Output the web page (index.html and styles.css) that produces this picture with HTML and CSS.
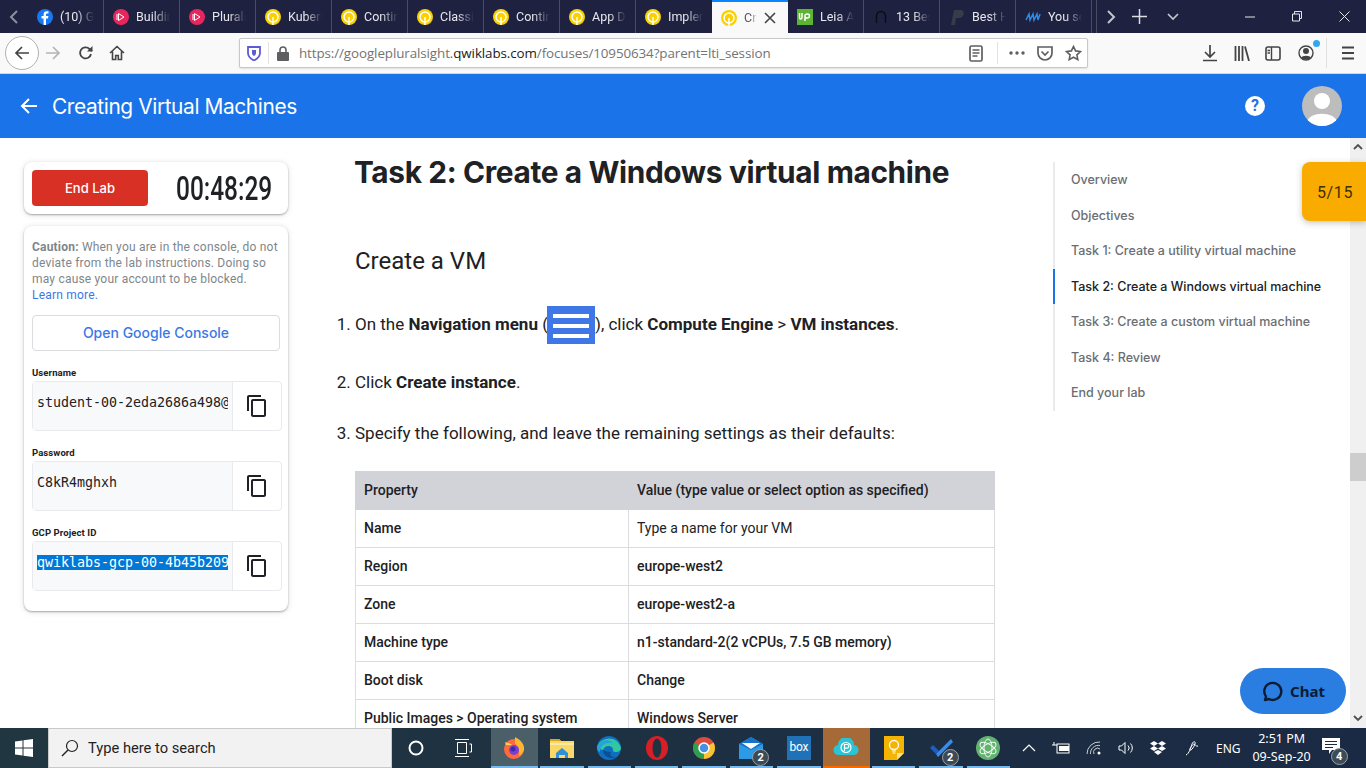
FILE: index.html
```html
<!DOCTYPE html>
<html lang="en">

<head>
    <meta charset="utf-8" />
    <title>Creating Virtual Machines</title>
    <link rel="stylesheet" href="styles.css">
</head>

<body>
    <div class="tabbar">
        <svg class="tab-scroll" width="10" height="16" viewBox="0 0 10 16"><path d="M8 2 2 8l6 6" fill="none" stroke="#8d8f9e" stroke-width="2"/></svg>
        <div class="tab"><svg class="favicon" viewBox="0 0 16 16"><circle cx="8" cy="8" r="8" fill="#1877f2"/><path d="M9 16V9.5h2l.4-2.4H9V5.8c0-.8.3-1.2 1.200-1.200h1.300V2.400C11 2.300 10.400 2.300 9.800 2.300 7.900 2.300 6.600 3.400 6.600 5.500v1.600H4.500v2.400h2.100V16z" fill="#fff"/></svg><span class="tab-text">(10) Get started</span></div>
        <div class="tab"><svg class="favicon" viewBox="0 0 16 16"><circle cx="8" cy="8" r="8" fill="#e8265e"/><path d="M5.500 4.500v7l5.500-3.500z" fill="none" stroke="#fff"/><path d="M4 5v6" stroke="#fff"/></svg><span class="tab-text">Building</span></div>
        <div class="tab"><svg class="favicon" viewBox="0 0 16 16"><circle cx="8" cy="8" r="8" fill="#e8265e"/><path d="M5.500 4.500v7l5.500-3.500z" fill="none" stroke="#fff"/><path d="M4 5v6" stroke="#fff"/></svg><span class="tab-text">Pluralsight</span></div>
        <div class="tab"><svg class="favicon" viewBox="0 0 16 16"><use href="#qwik"/></svg><span class="tab-text">Kubernetes</span></div>
        <div class="tab"><svg class="favicon" viewBox="0 0 16 16"><use href="#qwik"/></svg><span class="tab-text">Continuous</span></div>
        <div class="tab"><svg class="favicon" viewBox="0 0 16 16"><use href="#qwik"/></svg><span class="tab-text">Classification</span></div>
        <div class="tab"><svg class="favicon" viewBox="0 0 16 16"><use href="#qwik"/></svg><span class="tab-text">Continuous</span></div>
        <div class="tab"><svg class="favicon" viewBox="0 0 16 16"><use href="#qwik"/></svg><span class="tab-text">App Dev</span></div>
        <div class="tab tab-prev"><svg class="favicon" viewBox="0 0 16 16"><use href="#qwik"/></svg><span class="tab-text">Implementing</span></div>
        <div class="tab tab-active"><svg class="favicon" viewBox="0 0 16 16"><use href="#qwik"/></svg><span class="tab-text">Creating</span><svg class="tab-close" width="12" height="12" viewBox="0 0 12 12"><path d="M1 1l10 10M11 1 1 11" stroke="#444" stroke-width="1.600"/></svg></div>
        <div class="tab"><svg class="favicon" viewBox="0 0 16 16"><rect width="16" height="16" fill="#5cb531"/><path d="M2.500 4v4.500c0 2 2.500 2 2.500 0V4M8 12V6.500c0-2 4.500-2 4.500 .5s-3.500 2.500-4.500 1" fill="none" stroke="#fff" stroke-width="1.500"/></svg><span class="tab-text">Leia Admin</span></div>
        <div class="tab"><svg class="favicon" viewBox="0 0 16 16"><path d="M3.500 14V7a4.500 4.500 0 0 1 9 0v7" fill="none" stroke="#0c0c12" stroke-width="1.500"/></svg><span class="tab-text">13 Best</span></div>
        <div class="tab"><svg class="favicon" viewBox="0 0 16 16"><path d="M2 16 5 1h7c4 0 4 8-2 8H7l-1 7z" fill="#3a3b4a"/></svg><span class="tab-text">Best Host</span></div>
        <div class="tab"><svg class="favicon" viewBox="0 0 16 16"><path d="M1 11 4 5l1 6 3-6 1 6 3-6 1 6 2-6" fill="none" stroke="#2a8ce6" stroke-width="1.500"/></svg><span class="tab-text">You search</span></div>
        <div class="tab-controls">
            <svg width="10" height="16" viewBox="0 0 10 16"><path d="M2 2l6 6-6 6" fill="none" stroke="#c4c5cd" stroke-width="2"/></svg>
            <svg class="tab-plus" width="15" height="15" viewBox="0 0 15 15"><path d="M7.500 0v15M0 7.500h15" stroke="#dcdde2" stroke-width="1.500"/></svg>
            <svg class="tab-down" width="12" height="8" viewBox="0 0 12 8"><path d="M1 1l5 5 5-5" fill="none" stroke="#c4c5cd" stroke-width="1.700"/></svg>
        </div>
        <div class="window-btns">
            <svg width="10" height="10" viewBox="0 0 10 10"><path d="M0 5h10" stroke="#e6e6ea"/></svg>
            <svg width="10" height="11" viewBox="0 0 10 11"><path d="M.5 3h7v7h-7zM2.500 3V.5h7v7H7.500" fill="none" stroke="#e6e6ea"/></svg>
            <svg width="11" height="11" viewBox="0 0 11 11"><path d="M.5.500l10 10M10.500.500l-10 10" stroke="#e6e6ea"/></svg>
        </div>
    </div>

    <div class="toolbar">
        <div class="back-btn"><svg width="16" height="16" viewBox="0 0 16 16"><path d="M15 8H2M8 2 2 8l6 6" fill="none" stroke="#444" stroke-width="1.700"/></svg></div>
        <svg class="tool forward" width="16" height="16" viewBox="0 0 16 16"><path d="M1 8h13M8 2l6 6-6 6" fill="none" stroke="#b4b4b6" stroke-width="1.700"/></svg>
        <svg class="tool reload" width="16" height="16" viewBox="0 0 16 16"><path d="M13 9a5.500 5.500 0 1 1-1.500-5L14 6" fill="none" stroke="#444" stroke-width="1.800"/><path d="M14.500 1v5.500H9z" fill="#444"/></svg>
        <svg class="tool home" width="16" height="16" viewBox="0 0 16 16"><path d="M1 8 8 1.500 15 8M3.500 6.500V14.500h3.200v-4h2.600v4h3.200V6.500" fill="none" stroke="#444" stroke-width="1.600"/></svg>
        <div class="urlbar">
            <svg class="shield" width="14" height="16" viewBox="0 0 14 16"><path d="M1 2h12v6c0 4-3 6-6 7.500C4 14 1 12 1 8z" fill="none" stroke="#5b5bd6" stroke-width="1.800"/><path d="M5 5h4v3c0 1.500-1 2.500-2 3-1-.500-2-1.500-2-3z" fill="#5b5bd6"/></svg>
            <span class="url-sep sep-left"></span>
            <svg class="lock" width="12" height="15" viewBox="0 0 12 15"><rect y="6" width="12" height="9" rx="1" fill="#5f5f61"/><path d="M3 7V4a3 3 0 0 1 6 0v3" fill="none" stroke="#5f5f61" stroke-width="1.600"/></svg>
            <span class="url">https://googlepluralsight.<b>qwiklabs.com</b>/focuses/10950634?parent=lti_session</span>
            <svg class="url-reader" width="14" height="17" viewBox="0 0 14 17"><rect x="1" y="1" width="12" height="15" rx="1.500" fill="none" stroke="#5f5f61" stroke-width="1.700"/><path d="M3.500 5h7M3.500 8h7M3.500 11h5" stroke="#5f5f61" stroke-width="1.300"/></svg>
            <span class="url-sep sep-right"></span>
            <svg class="url-dots" width="16" height="4" viewBox="0 0 16 4"><circle cx="2" cy="2" r="1.700" fill="#5f5f61"/><circle cx="8" cy="2" r="1.700" fill="#5f5f61"/><circle cx="14" cy="2" r="1.700" fill="#5f5f61"/></svg>
            <svg class="url-pocket" width="16" height="15" viewBox="0 0 16 15"><path d="M1 1h14v6a7 7 0 0 1-14 0z" fill="none" stroke="#5f5f61" stroke-width="1.700"/><path d="M4.500 5.500 8 9l3.500-3.500" fill="none" stroke="#5f5f61" stroke-width="1.700"/></svg>
            <svg class="url-star" width="17" height="16" viewBox="0 0 17 16"><path d="M8.500 1.500l2.100 4.400 4.900.6-3.600 3.300.9 4.800-4.300-2.400-4.300 2.400.9-4.800-3.600-3.300 4.900-.6z" fill="none" stroke="#5f5f61" stroke-width="1.600"/></svg>
        </div>
        <svg class="tool download" width="16" height="17" viewBox="0 0 16 17"><path d="M8 0v11M3 7l5 5 5-5M1 15.500h14" fill="none" stroke="#444" stroke-width="1.700"/></svg>
        <svg class="tool library" width="16" height="15" viewBox="0 0 16 15"><path d="M1.500 0v15M5 0v15M8.500 0v15M11 .5l4 14.500" fill="none" stroke="#444" stroke-width="1.800"/></svg>
        <svg class="tool sidebar" width="16" height="15" viewBox="0 0 16 15"><rect x="1" y="1" width="14" height="13" rx="2" fill="none" stroke="#444" stroke-width="1.600"/><path d="M6.500 1v13M2.500 4.500h2.500M2.500 7h2.500" stroke="#444" stroke-width="1.400"/></svg>
        <div class="account">
            <svg width="16" height="16" viewBox="0 0 16 16"><circle cx="8" cy="8" r="7" fill="none" stroke="#444" stroke-width="1.400"/><circle cx="8" cy="6" r="3" fill="#444"/><path d="M3 13c1-3 9-3 10 0-2 2-8 2-10 0z" fill="#444"/></svg>
            <span class="account-dot"></span>
        </div>
        <span class="tool-sep"></span>
        <svg class="tool hamburger" width="14" height="14" viewBox="0 0 14 14"><path d="M1 1.500h12M1 7h12M1 12.500h12" stroke="#444" stroke-width="1.800"/></svg>
    </div>

    <header class="lab-header">
        <svg width="20" height="20" viewBox="0 0 20 20"><path d="M18 10H3M10 3l-7 7 7 7" fill="none" stroke="#fff" stroke-width="2"/></svg>
        <h2 class="lab-title">Creating Virtual Machines</h2>
        <span class="help">?</span>
        <div class="avatar"><svg width="40" height="40" viewBox="0 0 40 40"><circle cx="20" cy="15" r="8" fill="#fff"/><path d="M5 36c2-11 28-11 30 0a20 20 0 0 1-30 0z" fill="#fff"/></svg></div>
    </header>

    <div class="content">
        <aside class="lab-side">
            <div class="card timer-card">
                <button class="end-btn">End Lab</button>
                <span class="timer">00:48:29</span>
            </div>
            <div class="card creds-card">
                <p class="caution"><b>Caution:</b> When you are in the console, do not deviate from the lab instructions. Doing so may cause your account to be blocked. <a>Learn more.</a></p>
                <div class="console-btn">Open Google Console</div>
                <label>Username</label>
                <div class="field"><span class="field-value">student-00-2eda2686a498@qwiklabs.net</span><span class="copy"><svg width="24" height="24" viewBox="0 0 24 24"><use href="#copy"/></svg></span></div>
                <label>Password</label>
                <div class="field"><span class="field-value">C8kR4mghxh</span><span class="copy"><svg width="24" height="24" viewBox="0 0 24 24"><use href="#copy"/></svg></span></div>
                <label>GCP Project ID</label>
                <div class="field"><span class="field-value"><span class="selected">qwiklabs-gcp-00-4b45b2097a1f</span></span><span class="copy"><svg width="24" height="24" viewBox="0 0 24 24"><use href="#copy"/></svg></span></div>
            </div>
        </aside>

        <main class="lab-main">
            <h1>Task 2: Create a Windows virtual machine</h1>
            <h2 class="sub">Create a VM</h2>
            <ol>
                <li class="step-one">On the <b>Navigation menu</b> (<svg class="nav-icon" width="48" height="38" viewBox="0 0 48 38"><rect width="48" height="38" fill="#3f78e6"/><path d="M6 8h36v4H6zM6 18h36v4H6zM6 28h36v4H6z" fill="#fff"/></svg>), click <b>Compute Engine</b> &gt; <b>VM instances</b>.</li>
                <li class="step-two">Click <b>Create instance</b>.</li>
                <li class="step-three">Specify the following, and leave the remaining settings as their defaults:</li>
            </ol>
            <table>
                <tr><th>Property</th><th>Value (type value or select option as specified)</th></tr>
                <tr><td><b>Name</b></td><td>Type a name for your VM</td></tr>
                <tr><td><b>Region</b></td><td><b>europe-west2</b></td></tr>
                <tr><td><b>Zone</b></td><td><b>europe-west2-a</b></td></tr>
                <tr><td><b>Machine type</b></td><td><b>n1-standard-2(2 vCPUs, 7.5 GB memory)</b></td></tr>
                <tr><td><b>Boot disk</b></td><td><b>Change</b></td></tr>
                <tr><td><b>Public Images &gt; Operating system</b></td><td><b>Windows Server</b></td></tr>
            </table>
        </main>

        <nav class="toc">
            <a>Overview</a>
            <a>Objectives</a>
            <a>Task 1: Create a utility virtual machine</a>
            <a class="current">Task 2: Create a Windows virtual machine</a>
            <a>Task 3: Create a custom virtual machine</a>
            <a>Task 4: Review</a>
            <a>End your lab</a>
        </nav>

        <div class="scrollbar">
            <svg width="10" height="6" viewBox="0 0 10 6"><path d="M1 5l4-4 4 4" fill="none" stroke="#505050" stroke-width="1.800"/></svg>
            <span class="thumb"></span>
            <svg width="10" height="6" viewBox="0 0 10 6"><path d="M1 1l4 4 4-4" fill="none" stroke="#505050" stroke-width="1.800"/></svg>
        </div>

        <div class="progress">5/15</div>
        <div class="chat"><svg width="22" height="22" viewBox="0 0 22 22"><path d="M4 20l1-3.500A8.500 8.500 0 1 1 8 19z" fill="none" stroke="#0b1c36" stroke-width="2.400" stroke-linejoin="round"/></svg>Chat</div>
    </div>

    <footer class="taskbar">
        <div class="start"><svg width="18" height="18" viewBox="0 0 18 18"><path d="M0 2.500 7.500 1.400V8.500H0zM8.500 1.300 18 0V8.500H8.500zM0 9.500H7.500V16.600L0 15.500zM8.500 9.500H18V18L8.500 16.700z" fill="#fff"/></svg></div>
        <div class="search"><svg width="18" height="18" viewBox="0 0 18 18"><circle cx="11" cy="7" r="5.500" fill="none" stroke="#222" stroke-width="1.200"/><path d="M7 11l-6 6" stroke="#222" stroke-width="1.400"/></svg><span>Type here to search</span></div>
        <div class="app"><svg width="16" height="16" viewBox="0 0 16 16"><circle cx="8" cy="8" r="6.500" fill="none" stroke="#fff" stroke-width="2"/></svg></div>
        <div class="app app-view"><svg width="18" height="18" viewBox="0 0 18 18"><path d="M3.500 3.500h9v11h-9zM1 .5h14M1 17.500h14M15.500 5h2v8h-2" fill="none" stroke="#fff"/></svg></div>
        <div class="app on active"><svg width="24" height="24" viewBox="0 0 24 24"><circle cx="12" cy="13" r="10" fill="#ff6a3d"/><path d="M13 1c6 3 10 8 9 13-1 3-3 5-5 6 1-6-1-10-4-12z" fill="#ffb52e"/><path d="M3 6c2 1 5 1 7 3H4z" fill="#ffd257"/><circle cx="12" cy="14" r="5" fill="#7b3fd6"/><circle cx="11" cy="13" r="2.500" fill="#3a2ba8"/></svg></div>
        <div class="app on"><svg width="24" height="20" viewBox="0 0 24 20"><path d="M0 1h9l2 2h13v17H0z" fill="#f9d868"/><path d="M0 1h9l2 2H0z" fill="#d9a520"/><path d="M0 5h24v2H0z" fill="#fbe9a4"/><path d="M6 15l6-5 6 5v5h-3v-3H9v3H6z" fill="#2f8fd8"/></svg></div>
        <div class="app on"><svg width="24" height="24" viewBox="0 0 24 24"><circle cx="12" cy="12" r="12" fill="#0f6fbe"/><path d="M0 12C2 1 20-2 24 12c0 4-6 5-8 3 1-6-8-7-10-1z" fill="#30c8a0"/><path d="M0 12C2 4 12 2 16 7 9 6 3 9 3 16c-2-1-3-2-3-4z" fill="#2a9fe0"/><path d="M6 14c0 6 7 10 14 7-5 1-8-2-6-5-3 0-6-1-8-2z" fill="#0b4f96"/></svg></div>
        <div class="app on"><svg width="22" height="24" viewBox="0 0 22 24"><ellipse cx="11" cy="12" rx="11" ry="12" fill="#d81f26"/><ellipse cx="11" cy="12" rx="4.500" ry="9.500" fill="#1f3443"/></svg></div>
        <div class="app on"><svg width="24" height="24" viewBox="0 0 24 24"><circle cx="12" cy="12" r="11" fill="#dd4b3e"/><path d="M12 12 21.500 6.500A11 11 0 0 1 12 23z" fill="#f6c52f"/><path d="M12 12 12 23A11 11 0 0 1 2.500 6.500z" fill="#2f9e4f"/><circle cx="12" cy="12" r="5" fill="#4a90e2" stroke="#fff" stroke-width="1.500"/></svg></div>
        <div class="app on"><svg width="24" height="22" viewBox="0 0 24 22"><path d="M0 7 12 0l12 7v15H0z" fill="#2b9be8"/><path d="M0 7 12 0l12 7-12 6z" fill="#1673c9"/><path d="M3 6h18l-9 6z" fill="#fff"/></svg><span class="count">2</span></div>
        <div class="app on"><span class="box-logo">box</span></div>
        <div class="app pcloud"><svg width="26" height="18" viewBox="0 0 26 18"><path d="M6 17a5 5 0 0 1-1-10 8 8 0 0 1 16 0 5 5 0 0 1-1 10z" fill="#2bc4d6"/><circle cx="13" cy="9.500" r="5" fill="none" stroke="#fff" stroke-width="1.200"/><path d="M11.500 13V6.500h2.500a1.800 1.800 0 0 1 0 3.600h-2.500" fill="none" stroke="#fff" stroke-width="1.200"/></svg></div>
        <div class="app on"><svg width="20" height="24" viewBox="0 0 20 24"><path d="M0 0h20v17l-7 7H0z" fill="#f4b400"/><path d="M13 24v-7h7z" fill="#fbe09a"/><circle cx="10" cy="9" r="4.500" fill="none" stroke="#fff" stroke-width="1.300"/><path d="M8 15h4M8.500 17h3" stroke="#fff"/></svg></div>
        <div class="app on"><svg width="24" height="20" viewBox="0 0 24 20"><path d="M1 10l3-3 6 6-3 3z" fill="#1d5fc1"/><path d="M7 16 22 1l2 3L9 19z" fill="#3b8be8"/></svg><span class="count">2</span></div>
        <div class="app on"><svg width="24" height="24" viewBox="0 0 24 24"><circle cx="12" cy="12" r="12" fill="#62b36f"/><g fill="none" stroke="#fff" stroke-width=".9"><ellipse cx="12" cy="12" rx="4" ry="9"/><ellipse cx="12" cy="12" rx="4" ry="9" transform="rotate(60 12 12)"/><ellipse cx="12" cy="12" rx="4" ry="9" transform="rotate(120 12 12)"/></g></svg></div>
        <div class="tray">
            <svg width="14" height="8" viewBox="0 0 14 8"><path d="M1 7l6-6 6 6" fill="none" stroke="#fff" stroke-width="1.200"/></svg>
            <svg width="18" height="14" viewBox="0 0 18 14"><rect x="5" y="3" width="12" height="9" fill="none" stroke="#fff"/><rect x="7" y="5" width="10" height="5" fill="#fff"/><path d="M0 4h5M2 1v3" stroke="#fff"/></svg>
            <svg width="16" height="14" viewBox="0 0 16 14"><path d="M1 13A12 12 0 0 1 14 1M4.500 13A8 8 0 0 1 14 4.500M8 13A4 4 0 0 1 14 8" fill="none" stroke="#c8ced2"/><circle cx="13" cy="12" r="1.500" fill="#fff"/></svg>
            <svg width="16" height="14" viewBox="0 0 16 14"><path d="M1 5h2.500L7 1.500v11L3.500 9H1zM10 4.500a3.500 3.500 0 0 1 0 5M12.500 2.500a6.500 6.500 0 0 1 0 9" fill="none" stroke="#fff"/></svg>
            <svg width="16" height="15" viewBox="0 0 16 15"><path d="M4 0 8 2.500 4 5 0 2.500zM12 0l4 2.500L12 5 8 2.500zM4 5l4 2.500L4 10 0 7.500zM12 5l4 2.500L12 10 8 7.500zM4 11l4-2 4 2-4 3z" fill="#fff"/></svg>
            <svg class="tray-pen" width="14" height="16" viewBox="0 0 14 16"><path d="M1 15c3-1 5-8 6-11s4-3 3 0-4 7-5 6 3-6 4-6 2 3 4 2" fill="none" stroke="#fff"/></svg>
            <span class="lang">ENG</span>
            <span class="clock">2:51 PM<br>09-Sep-20</span>
            <div class="notif"><svg width="18" height="16" viewBox="0 0 18 16"><path d="M0 0h18v12h-8l-3 4v-4H0z" fill="#fff"/><path d="M3 3.500h12M3 6.500h12M3 9.500h8" stroke="#1b2b45"/></svg><span class="count">4</span></div>
        </div>
    </footer>

    <svg class="defs" width="0" height="0">
        <symbol id="qwik" viewBox="0 0 16 16">
            <circle cx="8" cy="8" r="8" fill="#fbd000"/>
            <circle cx="8" cy="8" r="5" fill="none" stroke="#fff" stroke-width="1.500"/>
            <path d="M8 16V8" stroke="#fff" stroke-width="1.500"/>
        </symbol>
        <symbol id="copy" viewBox="0 0 24 24">
            <path d="M16 1H4c-1.100 0-2 .9-2 2v14h2V3h12V1zm3 4H8c-1.100 0-2 .9-2 2v14c0 1.100.9 2 2 2h11c1.100 0 2-.9 2-2V7c0-1.100-.9-2-2-2zm0 16H8V7h11v14z" fill="#202124"/>
        </symbol>
    </svg>
</body>

</html>
```

FILE: styles.css
```css
* {
    box-sizing: border-box;
}

html,
body {
    height: 100%;
}

body {
    margin: 0;
    display: flex;
    flex-direction: column;
    height: 768px;
    overflow: hidden;
    font-family: Roboto, sans-serif;
    color: #202124;
    background: #fff;
}

.defs {
    position: absolute;
}

/* browser tabs */
.tabbar {
    flex: 0 0 33px;
    display: flex;
    align-items: stretch;
    background: #1f2140;
    color: #e8e8ee;
}

.tab-scroll {
    flex: 0 0 28px;
    align-self: center;
    padding: 0 9px;
    width: 28px;
}

.tab {
    flex: 0 0 76px;
    display: flex;
    align-items: center;
    gap: 7px;
    padding: 0 0 0 9px;
    border-right: 1px solid #4a4c66;
    margin: 0;
    overflow: hidden;
}

.tab-prev {
    border-right: none;
}

.favicon {
    flex: 0 0 16px;
    width: 16px;
    height: 16px;
}

.tab-text {
    flex: 1;
    min-width: 0;
    margin-right: 9px;
    font-size: 12.5px;
    white-space: nowrap;
    overflow: hidden;
    -webkit-mask-image: linear-gradient(90deg, #000 50%, transparent);
    mask-image: linear-gradient(90deg, #000 50%, transparent);
}

.tab-active {
    background: #f9f9fa;
    color: #55565f;
    border-right: none;
    border-top: 2px solid #0a84ff;
    padding-right: 12px;
}

.tab-active .tab-text {
    margin-right: 0;
}

.tab-close {
    flex: 0 0 12px;
}

.tab-controls {
    flex: 0 0 auto;
    display: flex;
    align-items: center;
    margin-left: 4px;
    border-left: 1px solid #4a4c66;
    padding-left: 9px;
    gap: 14px;
}

.tab-plus {
    margin-left: 2px;
}

.tab-down {
    margin-left: 6px;
}

.window-btns {
    margin-left: auto;
    display: flex;
    align-items: center;
    gap: 37px;
    padding-right: 16px;
}

/* browser toolbar */
.toolbar {
    flex: 0 0 41px;
    display: flex;
    align-items: center;
    background: #f9f9fa;
    border-bottom: 1px solid #d7d7db;
    position: relative;
}

.back-btn {
    flex: 0 0 34px;
    height: 34px;
    margin-left: 5px;
    border-radius: 50%;
    border: 1px solid #b1b1b3;
    background: #fff;
    display: flex;
    align-items: center;
    justify-content: center;
}

.tool {
    flex: 0 0 auto;
}

.forward {
    margin-left: 6px;
}

.reload {
    margin-left: 17px;
}

.home {
    margin-left: 15px;
}

.urlbar {
    flex: 0 0 849px;
    height: 30px;
    margin-left: 114px;
    display: flex;
    align-items: center;
    background: #fff;
    border: 1px solid #c8c8ca;
    border-radius: 2px;
    box-shadow: 0 1px 2px rgba(0, 0, 0, .1);
}

.shield {
    margin-left: 7px;
}

.url-sep {
    flex: 0 0 1px;
    height: 22px;
    background: #e3e3e5;
}

.sep-left {
    margin-left: 7px;
}

.sep-right {
    margin-left: 14px;
}

.lock {
    margin-left: 8px;
}

.url {
    margin-left: 10px;
    font-family: "Open Sans", sans-serif;
    font-size: 13.400px;
    color: #737373;
    white-space: nowrap;
    letter-spacing: -.1px;
}

.url b {
    font-weight: 400;
    color: #1a1a1a;
}

.url-reader {
    margin-left: auto;
}

.url-dots {
    margin-left: 11px;
}

.url-pocket {
    margin-left: 12px;
}

.url-star {
    margin: 0 5px 0 12px;
}

.download {
    margin-left: 114px;
}

.library {
    margin-left: 16px;
}

.sidebar {
    margin-left: 15px;
}

.account {
    position: relative;
    margin-left: 17px;
    height: 16px;
}

.account-dot {
    position: absolute;
    top: -5px;
    right: -6px;
    width: 7px;
    height: 7px;
    border-radius: 50%;
    background: #30a8f0;
}

.tool-sep {
    flex: 0 0 1px;
    height: 30px;
    margin-left: 12px;
    background: #e0e0e2;
}

.hamburger {
    margin-left: 14px;
}

/* blue lab header */
.lab-header {
    flex: 0 0 64px;
    display: flex;
    align-items: center;
    padding-left: 19px;
    background: #1a73e8;
    color: #fff;
}

.lab-title {
    margin: 0 0 0 13px;
    font-family: Inter, sans-serif;
    font-size: 20.900px;
    font-weight: 400;
    letter-spacing: -.4px;
}

.help {
    margin-left: auto;
    width: 20px;
    height: 20px;
    border-radius: 50%;
    background: #fff;
    color: #1a73e8;
    font-size: 16px;
    font-weight: 700;
    line-height: 20px;
    text-align: center;
}

.avatar {
    margin: 0 24px 0 37px;
    width: 40px;
    height: 40px;
    border-radius: 50%;
    background: #bdbdbd;
    overflow: hidden;
}

.avatar svg {
    display: block;
}

/* page body */
.content {
    flex: 1;
    min-height: 0;
    display: flex;
    overflow: hidden;
    position: relative;
}

.lab-side {
    flex: 0 0 264px;
    width: 264px;
    min-width: 0;
    margin-left: 24px;
    padding-top: 24px;
}

.card {
    background: #fff;
    border-radius: 8px;
    box-shadow: 0 1px 2px rgba(60, 64, 67, .4), 0 1px 6px rgba(60, 64, 67, .15);
}

.timer-card {
    height: 52px;
    display: flex;
    align-items: center;
    padding-left: 8px;
}

.end-btn {
    flex: 0 0 116px;
    height: 36px;
    border: none;
    border-radius: 4px;
    background: #d93025;
    color: #fff;
    font-family: Inter, sans-serif;
    font-size: 13px;
    font-weight: 500;
}

.timer {
    margin-left: 28px;
    font-size: 33px;
    font-weight: 500;
    white-space: nowrap;
    transform: scaleX(.74);
    transform-origin: left center;
    color: #202124;
}

.creds-card {
    margin-top: 12px;
    height: 385px;
    padding: 13px 6px 0 8px;
}

.caution {
    margin: 0;
    width: 248px;
    font-size: 12px;
    line-height: 16px;
    letter-spacing: .2px;
    color: #80868b;
}

.caution a {
    display: block;
    color: #3b78e7;
}

.console-btn {
    margin-top: 12px;
    width: 248px;
    height: 36px;
    border: 1px solid #dadce0;
    border-radius: 4px;
    color: #3b78e7;
    font-family: Inter, sans-serif;
    font-size: 14px;
    font-weight: 500;
    line-height: 34px;
    text-align: center;
}

.creds-card label {
    display: block;
    margin: 16px 0 2px;
    font-size: 9.500px;
    font-weight: 700;
    line-height: 12px;
    letter-spacing: .1px;
    color: #202124;
}

.field {
    display: flex;
    height: 50px;
    border: 1px solid #e8eaed;
    border-radius: 4px;
}

/* the thick right border keeps the long value from running up to the divider */
.field-value {
    flex: 0 0 199px;
    padding: 12px 0 0 4px;
    background: #f8f9fa;
    border-right: 4px solid #f8f9fa;
    font-family: "DejaVu Sans Mono", monospace;
    font-size: 13.300px;
    line-height: 18px;
    white-space: nowrap;
    overflow: hidden;
    color: #202124;
}

.selected {
    background: #0078d7;
    color: #fff;
}

.copy {
    flex: 1;
    display: flex;
    align-items: center;
    justify-content: center;
    border-left: 1px solid #e8eaed;
}

/* main column */
.lab-main {
    flex: 0 0 640px;
    margin-left: 67px;
}

.lab-main h1 {
    margin: 15px 0 0 -1px;
    font-family: Inter, sans-serif;
    font-size: 29.800px;
    font-weight: 700;
    line-height: 38px;
    letter-spacing: -.35px;
    white-space: nowrap;
}

.sub {
    margin: 54px 0 0;
    font-size: 24px;
    font-weight: 400;
    line-height: 32px;
}

.lab-main ol {
    margin: 0;
    padding: 0;
    font-size: 17px;
    line-height: 24px;
}

.step-one {
    margin-top: 35px;
    height: 38px;
    white-space: nowrap;
}

.step-two {
    margin-top: 20px;
}

.step-three {
    margin-top: 27px;
}

.nav-icon {
    vertical-align: middle;
    margin: -8px 0 -6px -1px;
}

.lab-main ol b {
    font-weight: 700;
}

.lab-main table {
    margin-top: 26px;
    width: 640px;
    border-collapse: collapse;
    font-size: 14px;
}

.lab-main th,
.lab-main td {
    height: 38px;
    padding: 0 8px 2px;
    border: 1px solid #dadce0;
    text-align: left;
}

.lab-main th {
    background: #d2d3d9;
    border-color: #d2d3d9;
    font-weight: 500;
}

.lab-main td b {
    font-weight: 500;
}

.lab-main tr > :first-child {
    width: 273px;
}

/* table of contents */
.toc {
    flex: 0 0 auto;
    align-self: flex-start;
    display: flex;
    flex-direction: column;
    margin: 24px 0 0 58px;
    border-left: 2px solid #e8eaed;
    font-family: Inter, sans-serif;
    font-size: 12.500px;
    font-weight: 500;
    color: #6a6e73;
}

.toc a {
    height: 35.500px;
    line-height: 35.500px;
    padding-left: 16px;
    margin-left: -2px;
    border-left: 2px solid transparent;
    white-space: nowrap;
}

.toc .current {
    color: #202124;
    border-left-color: #1a73e8;
}

.scrollbar {
    flex: 0 0 16px;
    margin-left: auto;
    display: flex;
    flex-direction: column;
    align-items: center;
    justify-content: space-between;
    padding: 6px 0 7px;
    background: #f0f0f0;
    position: relative;
}

.thumb {
    position: absolute;
    top: 315px;
    left: 0;
    width: 16px;
    height: 28px;
    background: #cdcdcd;
}

.progress {
    position: absolute;
    top: 24px;
    right: 0;
    width: 64px;
    height: 59px;
    padding-left: 15px;
    border-radius: 8px 0 0 8px;
    background: #f9ab00;
    box-shadow: 0 2px 6px rgba(60, 64, 67, .3);
    color: #3c3000;
    font-size: 16px;
    line-height: 61px;
    letter-spacing: .6px;
}

.chat {
    position: absolute;
    left: 1240px;
    top: 530px;
    width: 106px;
    height: 46px;
    display: flex;
    align-items: center;
    justify-content: center;
    gap: 7px;
    border-radius: 23px;
    background: #2a7de1;
    color: #0b1c36;
    font-family: "Noto Sans", sans-serif;
    font-size: 15px;
    font-weight: 700;
}

/* windows taskbar */
.taskbar {
    flex: 0 0 40px;
    display: flex;
    align-items: stretch;
    background: linear-gradient(90deg, #203640, #1b2a44);
    color: #fff;
}

.start {
    flex: 0 0 48px;
    display: flex;
    align-items: center;
    justify-content: center;
}

.search {
    flex: 0 0 344px;
    display: flex;
    align-items: center;
    gap: 9px;
    padding-left: 12px;
    background: #f2f2f2;
    border: 1px solid #c9c9c9;
    color: #222;
    font-size: 14.700px;
}

.app {
    flex: 0 0 47.400px;
    position: relative;
    display: flex;
    align-items: center;
    justify-content: center;
}

.app-view {
    margin-right: 4px;
}

.app.on::after {
    content: "";
    position: absolute;
    left: 2px;
    right: 2px;
    bottom: 0;
    height: 2px;
    background: #76b9ed;
}

.app.active {
    background: #4a5f68;
}

.app.active::after {
    left: 0;
    right: 0;
}

.app.pcloud {
    background: #a66a38;
    border-bottom: 2px solid #f76a00;
}

.box-logo {
    width: 24px;
    height: 24px;
    background: #1f72b8;
    color: #fff;
    font-size: 12px;
    line-height: 23px;
    text-align: center;
    letter-spacing: -.3px;
}

.count {
    position: absolute;
    right: 6px;
    bottom: 2px;
    width: 17px;
    height: 17px;
    border-radius: 50%;
    background: #3d4b57;
    border: 1px solid #9aa1a7;
    color: #fff;
    font-size: 11px;
    font-weight: 700;
    line-height: 15px;
    text-align: center;
}

.tray {
    flex: 1;
    display: flex;
    align-items: center;
    padding-left: 2px;
}

.tray svg {
    flex: 0 0 auto;
    margin: 0 8px;
}

.tray .tray-pen {
    margin-left: 11px;
}

.lang {
    margin-left: 9px;
    font-family: "Noto Sans", sans-serif;
    font-size: 12px;
}

.clock {
    margin-left: 10px;
    width: 62px;
    font-family: "Noto Sans", sans-serif;
    font-size: 12.500px;
    line-height: 18px;
    text-align: center;
}

.notif {
    position: relative;
    margin-left: 1px;
}

.notif .count {
    right: 0;
    bottom: -7px;
}
```
